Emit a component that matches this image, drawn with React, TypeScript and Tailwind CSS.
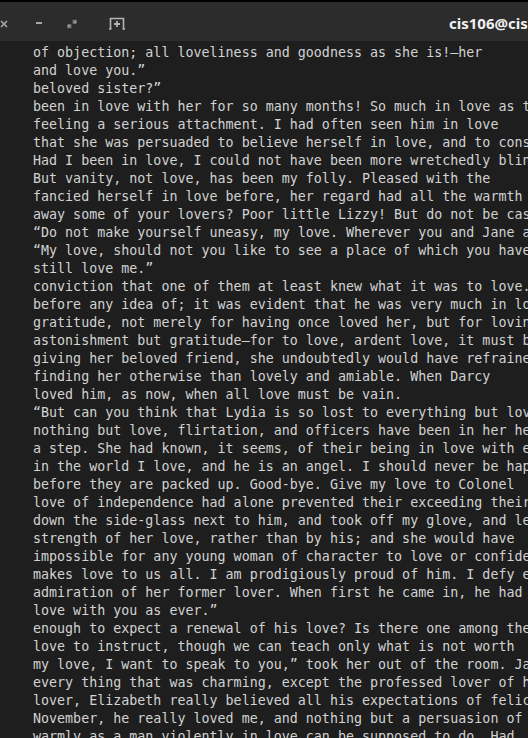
import React from "react";

const lines = [
  "of objection; all loveliness and goodness as she is!\u2014her",
  "and love you.\u201d",
  "beloved sister?\u201d",
  "been in love with her for so many months! So much in love as to",
  "feeling a serious attachment. I had often seen him in love",
  "that she was persuaded to believe herself in love, and to consider",
  "Had I been in love, I could not have been more wretchedly blind.",
  "But vanity, not love, has been my folly. Pleased with the",
  "fancied herself in love before, her regard had all the warmth",
  "away some of your lovers? Poor little Lizzy! But do not be cast down.",
  "\u201cDo not make yourself uneasy, my love. Wherever you and Jane are",
  "\u201cMy love, should not you like to see a place of which you have heard",
  "still love me.\u201d",
  "conviction that one of them at least knew what it was to love.",
  "before any idea of; it was evident that he was very much in love",
  "gratitude, not merely for having once loved her, but for loving",
  "astonishment but gratitude\u2014for to love, ardent love, it must be",
  "giving her beloved friend, she undoubtedly would have refrained",
  "finding her otherwise than lovely and amiable. When Darcy",
  "loved him, as now, when all love must be vain.",
  "\u201cBut can you think that Lydia is so lost to everything but love",
  "nothing but love, flirtation, and officers have been in her head",
  "a step. She had known, it seems, of their being in love with each",
  "in the world I love, and he is an angel. I should never be happy",
  "before they are packed up. Good-bye. Give my love to Colonel",
  "love of independence had alone prevented their exceeding their",
  "down the side-glass next to him, and took off my glove, and let",
  "strength of her love, rather than by his; and she would have",
  "impossible for any young woman of character to love or confide",
  "makes love to us all. I am prodigiously proud of him. I defy even",
  "admiration of her former lover. When first he came in, he had",
  "love with you as ever.\u201d",
  "enough to expect a renewal of his love? Is there one among the",
  "love to instruct, though we can teach only what is not worth",
  "my love, I want to speak to you,\u201d took her out of the room. Jane",
  "every thing that was charming, except the professed lover of her",
  "lover, Elizabeth really believed all his expectations of felicity",
  "November, he really loved me, and nothing but a persuasion of my",
  "warmly as a man violently in love can be supposed to do. Had",
];

export default function App() {
  return (
    <div className="w-[528px] h-[738px] overflow-hidden bg-black flex flex-col">
      <div className="mt-[2px] h-[39px] shrink-0 bg-[#2c2c2c] flex items-center relative">
        <div className="flex items-center">
          <svg width="8" height="8" viewBox="0 0 8 8" className="mt-[4px]">
            <path d="M1 1 L7 7 M7 1 L1 7" stroke="#a8a8a8" strokeWidth="1.6" />
          </svg>
          <svg width="8" height="4" viewBox="0 0 8 4" className="ml-[27px] mt-[3px]">
            <rect x="1" y="1" width="6" height="2" fill="#a8a8a8" />
          </svg>
          <svg width="10" height="10" viewBox="0 0 10 10" className="ml-[24px] mt-[4px]">
            <path d="M9.5 0.8 L5.6 4.4 L9.5 4.4 Z" fill="#a8a8a8" />
            <path d="M9.5 0.8 L5.6 4.4 L5.6 0.8 Z" fill="#a8a8a8" opacity="0.6" />
            <path d="M0.5 9.2 L4.4 5.6 L0.5 5.6 Z" fill="#a8a8a8" />
            <path d="M0.5 9.2 L4.4 5.6 L4.4 9.2 Z" fill="#a8a8a8" opacity="0.6" />
          </svg>
          <svg width="16" height="13" viewBox="0 0 16 13" className="ml-[32px] mt-[3px]">
            <path d="M1.5 12 V1.5 H14.5 V12" fill="none" stroke="#b4b4b4" strokeWidth="1.6" />
            <path d="M0 12 H2.5 M13.5 12 H16" stroke="#b4b4b4" strokeWidth="1.6" />
            <path d="M8 4 V10 M5 7 H11" stroke="#b4b4b4" strokeWidth="1.8" />
          </svg>
        </div>
        <div
          className="absolute left-[449px] top-[10px] text-[15px] font-bold text-[#f0f0f0] whitespace-nowrap"
          style={{ fontFamily: '"Noto Sans", "Open Sans", sans-serif' }}
        >
          cis106@cis106-vm: ~
        </div>
      </div>
      <div
        className="flex-1 bg-[#1e1e1e] pt-[3px] pl-[33px] text-[13.33px] leading-[18px] text-[#d2d2d2] whitespace-pre overflow-hidden"
        style={{ fontFamily: '"DejaVu Sans Mono", "Liberation Mono", monospace' }}
      >
        {lines.map((l, i) => (
          <div key={i}>{l}</div>
        ))}
      </div>
    </div>
  );
}
